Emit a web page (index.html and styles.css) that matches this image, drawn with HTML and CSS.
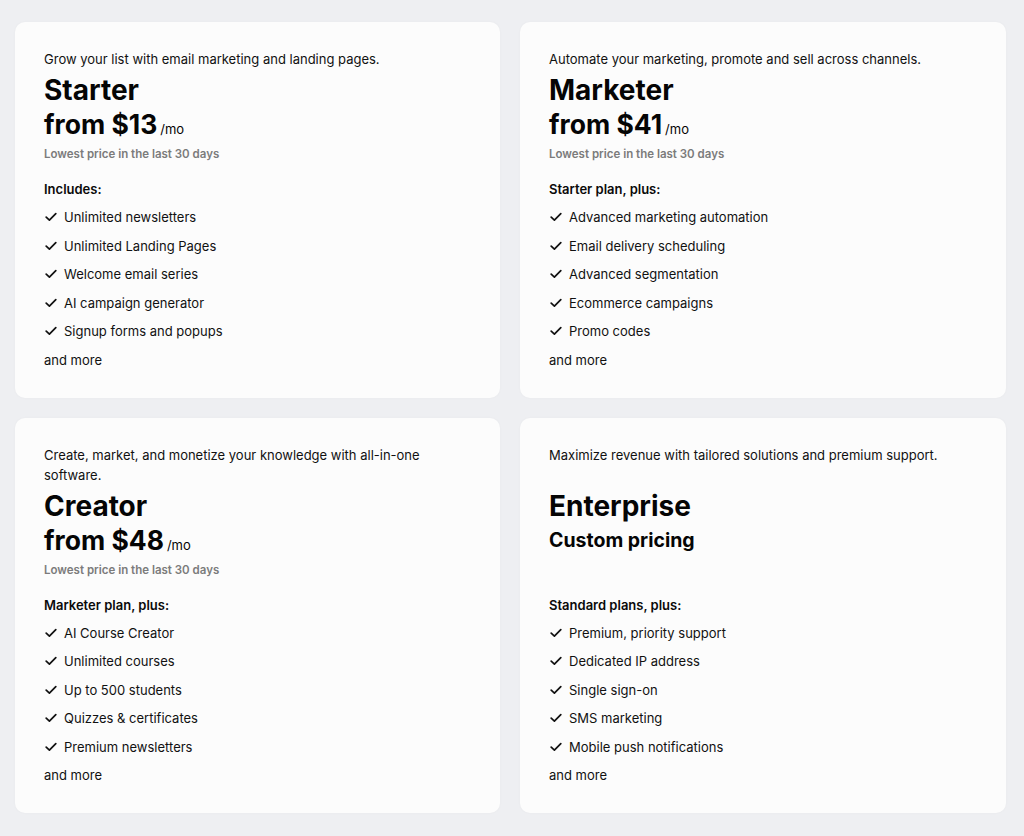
FILE: index.html
```html
<!DOCTYPE html>
<html lang="en">
<head>
<meta charset="utf-8">
<title>Plans</title>
<link rel="stylesheet" href="styles.css">
</head>
<body>
<main class="plans">
  <section class="card">
    <p class="desc">Grow your list with email marketing and landing pages.</p>
    <h2 class="title">Starter</h2>
    <p class="price">from $13<span class="per">/mo</span></p>
    <p class="lowest">Lowest price in the last 30 days</p>
    <h3 class="feat-head">Includes:</h3>
    <ul class="feats">
      <li><svg class="check" viewBox="0 0 12 10"><path d="M1.2 5.2 4.4 8.2 10.8 1.6"/></svg>Unlimited newsletters</li>
      <li><svg class="check" viewBox="0 0 12 10"><path d="M1.2 5.2 4.4 8.2 10.8 1.6"/></svg>Unlimited Landing Pages</li>
      <li><svg class="check" viewBox="0 0 12 10"><path d="M1.2 5.2 4.4 8.2 10.8 1.6"/></svg>Welcome email series</li>
      <li><svg class="check" viewBox="0 0 12 10"><path d="M1.2 5.2 4.4 8.2 10.8 1.6"/></svg>AI campaign generator</li>
      <li><svg class="check" viewBox="0 0 12 10"><path d="M1.2 5.2 4.4 8.2 10.8 1.6"/></svg>Signup forms and popups</li>
      <li class="more">and more</li>
    </ul>
  </section>
  <section class="card">
    <p class="desc">Automate your marketing, promote and sell across channels.</p>
    <h2 class="title">Marketer</h2>
    <p class="price">from $41<span class="per">/mo</span></p>
    <p class="lowest">Lowest price in the last 30 days</p>
    <h3 class="feat-head">Starter plan, plus:</h3>
    <ul class="feats">
      <li><svg class="check" viewBox="0 0 12 10"><path d="M1.2 5.2 4.4 8.2 10.8 1.6"/></svg>Advanced marketing automation</li>
      <li><svg class="check" viewBox="0 0 12 10"><path d="M1.2 5.2 4.4 8.2 10.8 1.6"/></svg>Email delivery scheduling</li>
      <li><svg class="check" viewBox="0 0 12 10"><path d="M1.2 5.2 4.4 8.2 10.8 1.6"/></svg>Advanced segmentation</li>
      <li><svg class="check" viewBox="0 0 12 10"><path d="M1.2 5.2 4.4 8.2 10.8 1.6"/></svg>Ecommerce campaigns</li>
      <li><svg class="check" viewBox="0 0 12 10"><path d="M1.2 5.2 4.4 8.2 10.8 1.6"/></svg>Promo codes</li>
      <li class="more">and more</li>
    </ul>
  </section>
  <section class="card">
    <p class="desc desc--tall">Create, market, and monetize your knowledge with all-in-one software.</p>
    <h2 class="title">Creator</h2>
    <p class="price">from $48<span class="per">/mo</span></p>
    <p class="lowest">Lowest price in the last 30 days</p>
    <h3 class="feat-head">Marketer plan, plus:</h3>
    <ul class="feats">
      <li><svg class="check" viewBox="0 0 12 10"><path d="M1.2 5.2 4.4 8.2 10.8 1.6"/></svg>AI Course Creator</li>
      <li><svg class="check" viewBox="0 0 12 10"><path d="M1.2 5.2 4.4 8.2 10.8 1.6"/></svg>Unlimited courses</li>
      <li><svg class="check" viewBox="0 0 12 10"><path d="M1.2 5.2 4.4 8.2 10.8 1.6"/></svg>Up to 500 students</li>
      <li><svg class="check" viewBox="0 0 12 10"><path d="M1.2 5.2 4.4 8.2 10.8 1.6"/></svg>Quizzes &amp; certificates</li>
      <li><svg class="check" viewBox="0 0 12 10"><path d="M1.2 5.2 4.4 8.2 10.8 1.6"/></svg>Premium newsletters</li>
      <li class="more">and more</li>
    </ul>
  </section>
  <section class="card">
    <p class="desc desc--tall">Maximize revenue with tailored solutions and premium support.</p>
    <h2 class="title">Enterprise</h2>
    <p class="price price--custom">Custom pricing</p>
    <div class="lowest-spacer"></div>
    <h3 class="feat-head">Standard plans, plus:</h3>
    <ul class="feats">
      <li><svg class="check" viewBox="0 0 12 10"><path d="M1.2 5.2 4.4 8.2 10.8 1.6"/></svg>Premium, priority support</li>
      <li><svg class="check" viewBox="0 0 12 10"><path d="M1.2 5.2 4.4 8.2 10.8 1.6"/></svg>Dedicated IP address</li>
      <li><svg class="check" viewBox="0 0 12 10"><path d="M1.2 5.2 4.4 8.2 10.8 1.6"/></svg>Single sign-on</li>
      <li><svg class="check" viewBox="0 0 12 10"><path d="M1.2 5.2 4.4 8.2 10.8 1.6"/></svg>SMS marketing</li>
      <li><svg class="check" viewBox="0 0 12 10"><path d="M1.2 5.2 4.4 8.2 10.8 1.6"/></svg>Mobile push notifications</li>
      <li class="more">and more</li>
    </ul>
  </section>
</main>
</body>
</html>
```

FILE: styles.css
```css
* { box-sizing: border-box; }
html, body { margin: 0; padding: 0; }
body {
  background: #eeeff2;
  font-family: Inter, "Noto Sans", sans-serif;
  color: #0a0a0a;
  width: 1024px;
  height: 836px;
  overflow: hidden;
}
.plans {
  display: grid;
  grid-template-columns: 485px 486px;
  column-gap: 20px;
  row-gap: 20px;
  padding: 22px 18px 0 15px;
}
.card {
  background: #fcfcfc;
  border-radius: 10px;
  padding: 27px 29px 28px 29px;
  box-shadow: 0 0 3px rgba(0, 0, 0, 0.03);
}
.desc {
  margin: 0;
  font-size: 13px;
  line-height: 20px;
  color: #111;
}
.desc--tall { min-height: 40px; }
.title {
  margin: 4px 0 0;
  font-size: 28px;
  line-height: 34px;
  font-weight: 700;
  color: #050505;
}
.price {
  margin: 0;
  font-size: 26.5px;
  line-height: 35px;
  font-weight: 700;
  color: #050505;
}
.price--custom { font-size: 19.5px; }
.per {
  font-size: 13px;
  line-height: 1;
  font-weight: 400;
  margin-left: 3px;
}
.lowest {
  margin: 4px 0 0;
  font-size: 11.5px;
  line-height: 16px;
  font-weight: 600;
  color: #7b7b7b;
}
.lowest-spacer { height: 16px; margin-top: 4px; }
.feat-head {
  margin: 17px 0 0;
  font-size: 13px;
  line-height: 20px;
  font-weight: 600;
  color: #0a0a0a;
}
.feats {
  list-style: none;
  margin: 8px 0 0;
  padding: 0;
  display: flex;
  flex-direction: column;
  gap: 8.5px;
}
.feats li {
  display: flex;
  align-items: center;
  font-size: 13px;
  line-height: 20px;
  color: #111;
}
.check {
  width: 12px;
  height: 10px;
  margin: 0 7px 0 1px;
  flex: none;
  fill: none;
  stroke: #111;
  stroke-width: 1.7;
  stroke-linecap: round;
  stroke-linejoin: round;
}
```
